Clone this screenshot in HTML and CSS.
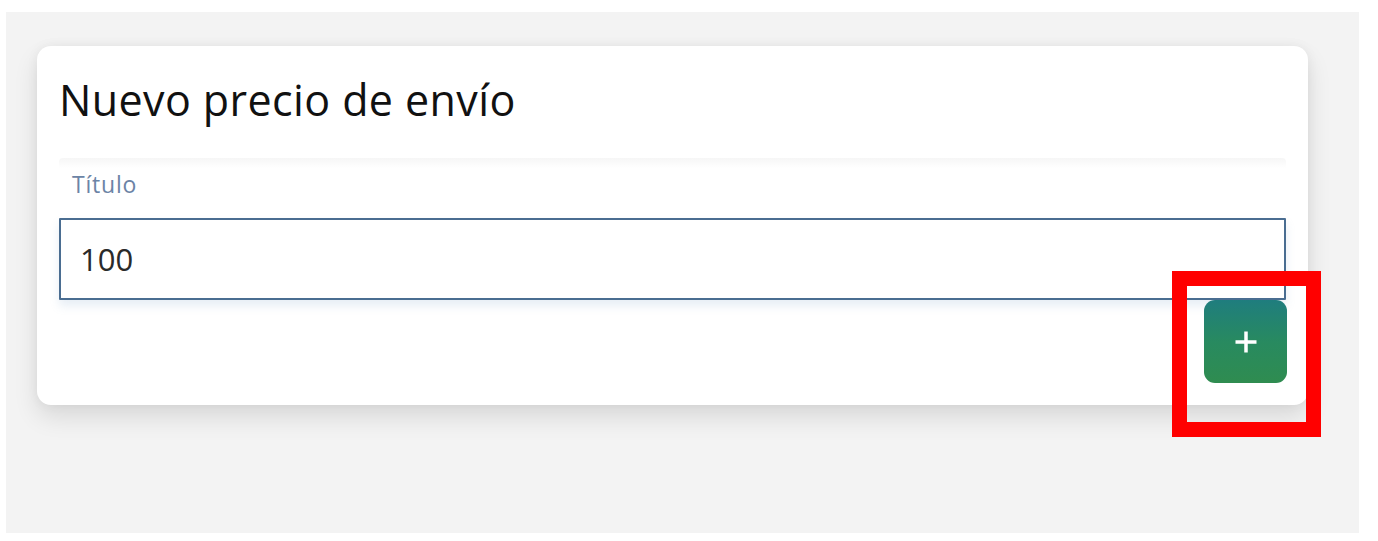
FILE: index.html
```html
<!DOCTYPE html>
<html lang="es">
<head>
<meta charset="utf-8">
<title>Nuevo precio de envío</title>
<link rel="stylesheet" href="styles.css">
</head>
<body>
<div class="stage">
  <section class="card">
    <h1 class="card-title">Nuevo precio de envío</h1>
    <div class="field">
      <label class="field-label" for="titulo">Título</label>
      <input class="field-input" id="titulo" type="text" value="100">
    </div>
    <div class="actions">
      <button class="add-btn" type="button" aria-label="Agregar">
        <svg width="24" height="24" viewBox="0 0 24 24" aria-hidden="true">
          <path d="M12 1.5v21M1.5 12h21" stroke="#ffffff" stroke-width="3.5" fill="none"/>
        </svg>
      </button>
      <span class="highlight" aria-hidden="true"></span>
    </div>
  </section>
</div>
</body>
</html>
```
FILE: styles.css
```css
* { box-sizing: border-box; }

html, body {
  margin: 0;
  background: #ffffff;
}

body {
  font-family: "Open Sans", "Noto Sans", sans-serif;
  padding: 12px 0 0 6px;
}

.stage {
  width: 1353px;
  height: 521px;
  background: #f3f3f3;
  padding: 34px 0 0 31px;
}

.card {
  width: 1271px;
  height: 359px;
  background: #ffffff;
  border-radius: 14px;
  box-shadow: 0 12px 24px rgba(0, 0, 0, 0.11), 0 0 12px rgba(0, 0, 0, 0.05);
  padding: 26px 22px 22px 22px;
  display: flex;
  flex-direction: column;
}

.card-title {
  margin: 0;
  font-size: 43px;
  line-height: 56px;
  font-weight: 500;
  color: #111111;
  letter-spacing: 0.4px;
}

.field {
  margin-top: 30px;
  display: flex;
  flex-direction: column;
}

.field-label {
  display: block;
  height: 60px;
  padding: 11px 0 0 13px;
  font-size: 23px;
  line-height: 30px;
  letter-spacing: 0.8px;
  color: #6c84a6;
  background: linear-gradient(to bottom, #f6f6f6 0, #ffffff 10px, #ffffff 100%);
  border-radius: 4px;
}

.field-input {
  display: block;
  width: 100%;
  height: 82px;
  margin: 0;
  padding: 0 19px;
  border: 2px solid #4a6d91;
  border-radius: 1px;
  font-family: "Open Sans", "Noto Sans", sans-serif;
  font-size: 31px;
  color: #2a2a2a;
  background: #ffffff;
  box-shadow: 0 6px 10px rgba(120, 160, 200, 0.18);
  outline: none;
}

.actions {
  position: relative;
  display: flex;
  justify-content: flex-end;
}

.add-btn {
  width: 83px;
  height: 83px;
  border: 0;
  border-radius: 11px;
  background: linear-gradient(to bottom, #1f7d7e 0%, #288a60 50%, #2f8c50 100%);
  display: flex;
  align-items: center;
  justify-content: center;
  padding: 0;
  margin-right: -1px;
  cursor: pointer;
}

.highlight {
  position: absolute;
  right: -35px;
  top: -29px;
  width: 149px;
  height: 166px;
  border: 15px solid #ff0000;
  pointer-events: none;
}
```
